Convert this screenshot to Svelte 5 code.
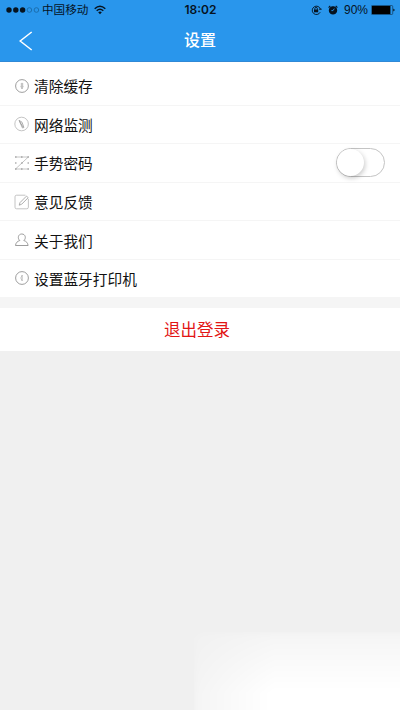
<script lang="ts">
  type Item = {
    icon: string;
    label: string;
    toggle?: boolean;
  };

  const items: Item[] = [
    { icon: "clear", label: "清除缓存" },
    { icon: "network", label: "网络监测" },
    { icon: "gesture", label: "手势密码", toggle: true },
    { icon: "feedback", label: "意见反馈" },
    { icon: "about", label: "关于我们" },
    { icon: "bluetooth", label: "设置蓝牙打印机" },
  ];

  let gestureOn = $state(false);
</script>

<div class="screen">
  <header>
    <div class="status">
      <div class="carrier">
        <svg class="signal" width="34" height="8" viewBox="0 0 34 8">
          <circle cx="3" cy="4" r="2.7" />
          <circle cx="9.8" cy="4" r="2.7" />
          <circle cx="16.6" cy="4" r="2.7" />
          <circle class="empty" cx="23.4" cy="4" r="2.3" />
          <circle class="empty" cx="30.4" cy="4" r="2.3" />
        </svg>
        <span class="operator">中国移动</span>
        <svg class="wifi" width="12" height="10" viewBox="0 0 12 10">
          <path d="M.7 3.7Q6-1.2 11.3 3.7M2.7 5.8Q6 2.8 9.3 5.8" />
          <path class="solid" d="M4.2 7.2Q6 5.8 7.8 7.2L6 9.2Z" />
        </svg>
      </div>
      <span class="time">18:02</span>
      <div class="indicators">
        <svg class="lock" width="11" height="10" viewBox="0 0 11 10">
          <path d="M9.2 7.2A4.2 4.2 0 1 1 9.5 4.3M8 4.2h2.7M3.8 4.8V3.7a1.3 1.3 0 0 1 2.6 0v1.1" />
          <rect x="3" y="4.5" width="4.2" height="2.8" />
        </svg>
        <svg class="alarm" width="10" height="10" viewBox="0 0 10 10">
          <circle cx="5" cy="5.4" r="3.6" />
          <path d="M.6 2.6 2.3.9M9.4 2.6 7.7.9" />
          <path class="hand" d="M6.3 3.6 5 5.6H3.4" />
        </svg>
        <span class="percent">90%</span>
        <svg class="battery" width="24" height="10" viewBox="0 0 24 10">
          <rect class="case" x=".3" y=".5" width="21.4" height="9" rx="1" />
          <rect x="1" y="1" width="18.4" height="8" />
          <path d="M22.4 3.4 23.8 5l-1.4 1.6Z" />
        </svg>
      </div>
    </div>
    <nav>
      <button class="back" type="button" aria-label="返回">
        <svg width="14" height="20" viewBox="0 0 14 20"><path d="M12.7 1 1.2 10l11.5 9" /></svg>
      </button>
      <h1>设置</h1>
    </nav>
  </header>

  <ul>
    {#each items as item (item.icon)}
      <li>
        <svg class="icon" width="16" height="16" viewBox="0 0 16 16">
          {#if item.icon === "clear"}
            <circle cx="8" cy="8" r="6.4" />
            <path class="pale" d="M8 4.8v6M6.8 8.2 8 11l1.2-2.8M7.3 5v4M8.7 5v4" />
          {:else if item.icon === "network"}
            <circle class="pale" cx="7.6" cy="8" r="6.8" />
            <path class="mid" d="M5 4.3 8.5 12l1.4-.5L8 6.2ZM5.7 5.5 9 11" />
          {:else if item.icon === "gesture"}
            <path class="pale" d="M1.5 2h12.8L1.5 14h13" />
            <path class="dots" d="M1 2h1.5M7 2h1.5M13.5 2H15M1 8h1.5M7.2 8h1.5M13.5 8H15M1 14h1.5M7 14h1.5M13.5 14H15" />
          {:else if item.icon === "feedback"}
            <path class="pale" d="M11.5 1.2H2.6Q1 1.2 1 2.8v10.4q0 1.6 1.6 1.6h10.2q1.6 0 1.6-1.6V5" />
            <path class="mid" d="m5.2 11.2.8-2.6 6.5-6.5 1.7 1.6-6.5 6.5Z" />
          {:else if item.icon === "about"}
            <path d="M5.8 8.5C3.3 6.6 4 2 7.8 2s4.6 4.6 2 6.5c2.5.8 4 2.3 4.3 5H1.5c.3-2.7 1.8-4.2 4.3-5Z" />
          {:else}
            <circle cx="8" cy="8" r="6.4" />
            <path class="pale" d="M8.2 5v6M8.2 5 6.8 8l1.4 3" />
          {/if}
        </svg>
        <span>{item.label}</span>
        {#if item.toggle}
          <button
            class="switch"
            class:on={gestureOn}
            type="button"
            role="switch"
            aria-label={item.label}
            aria-checked={gestureOn}
            onclick={() => (gestureOn = !gestureOn)}
          >
            <i></i>
          </button>
        {/if}
      </li>
    {/each}
  </ul>

  <button class="logout" type="button">退出登录</button>

  <div class="glow"></div>
</div>

<style>
  :global(body) { margin: 0; }

  .screen, .screen * { box-sizing: border-box; }
  .screen { position: relative; display: flex; flex-direction: column; height: 710px; overflow: hidden; background: #f0f0f0; font-family: "Liberation Sans", "Noto Sans CJK SC", sans-serif; color: #111; }
  button { border: 0; padding: 0; font: inherit; background: none; cursor: pointer; }
  svg { display: block; flex: none; fill: none; }

  header { flex: none; height: 62px; background: #2996ec; border-bottom: 1px solid #3089d6; }
  .status { display: grid; grid-template-columns: 1fr auto 1fr; align-items: center; height: 20px; padding: 0 5px 0 6px; color: #06131f; }
  .carrier, .indicators { display: flex; align-items: center; }
  .indicators { justify-content: flex-end; }
  .signal { fill: #06131f; }
  .signal .empty { fill: none; stroke: #18649f; stroke-width: 0.8; }
  .operator { margin-left: 2px; font-size: 11.6px; line-height: 20px; }
  .wifi { margin-left: 6px; stroke: #06131f; stroke-width: 1.5; }
  .wifi .solid { fill: #06131f; stroke: none; }
  .time { font: 600 12px/20px Inter, sans-serif; }
  .lock { margin-right: 6px; stroke: #06131f; stroke-width: 0.9; }
  .lock rect { fill: #06131f; stroke: none; }
  .alarm { margin-right: 6px; fill: #06131f; stroke: #06131f; stroke-width: 1.2; }
  .alarm .hand { fill: none; stroke: #2996ec; stroke-width: 0.9; }
  .percent { font-size: 12px; line-height: 20px; }
  .battery { margin-left: 3px; fill: #000; }
  .battery .case { fill: none; stroke: #0c2b45; stroke-width: 0.6; }

  nav { display: grid; grid-template-columns: 1fr auto 1fr; align-items: center; height: 42px; padding: 0 19px; color: #fff; }
  .back { justify-self: start; }
  .back path { stroke: #fff; stroke-width: 1.5; }
  h1 { margin: 0; font-size: 16px; font-weight: 500; line-height: 24px; }

  ul { flex: none; height: 235px; margin: 0; padding: 5px 0 0; list-style: none; background: #fff; }
  li { display: flex; align-items: center; height: 38.6px; padding: 0 15px 0 14px; border-bottom: 1px solid #f5f5f5; font-size: 14.7px; }
  li:last-child { height: 37px; border-bottom: 0; }
  .icon { margin-right: 4px; stroke: #858585; stroke-width: 0.8; }
  .icon .pale { stroke: #b5b5b5; }
  .icon .mid { stroke: #999; }
  .icon .dots { stroke: #888; stroke-width: 1.1; }
  .switch { width: 49px; height: 29px; margin-left: auto; border: 1px solid #c4c4c4; border-radius: 15px; background: #fff; }
  .switch i { display: block; width: 27px; height: 27px; border-radius: 50%; background: #fff; box-shadow: 1px 2px 5px rgba(0, 0, 0, 0.22); transition: transform 0.2s; }
  .switch.on { background: #2996ec; }
  .switch.on i { transform: translateX(20px); }

  .logout { flex: none; height: 54px; padding: 0 6px 2px 0; border-top: 11px solid #f5f5f5; color: #e21515; background: #fff; font-size: 16.5px; }

  .glow { position: absolute; right: -24px; bottom: -24px; width: 230px; height: 102px; border-radius: 8px; background: #fff; filter: blur(3px); mask-image: linear-gradient(to right, rgba(0, 0, 0, 0.3), #000 35%), linear-gradient(to bottom, rgba(0, 0, 0, 0.3), #000 60%); mask-composite: intersect; pointer-events: none; }
</style>
